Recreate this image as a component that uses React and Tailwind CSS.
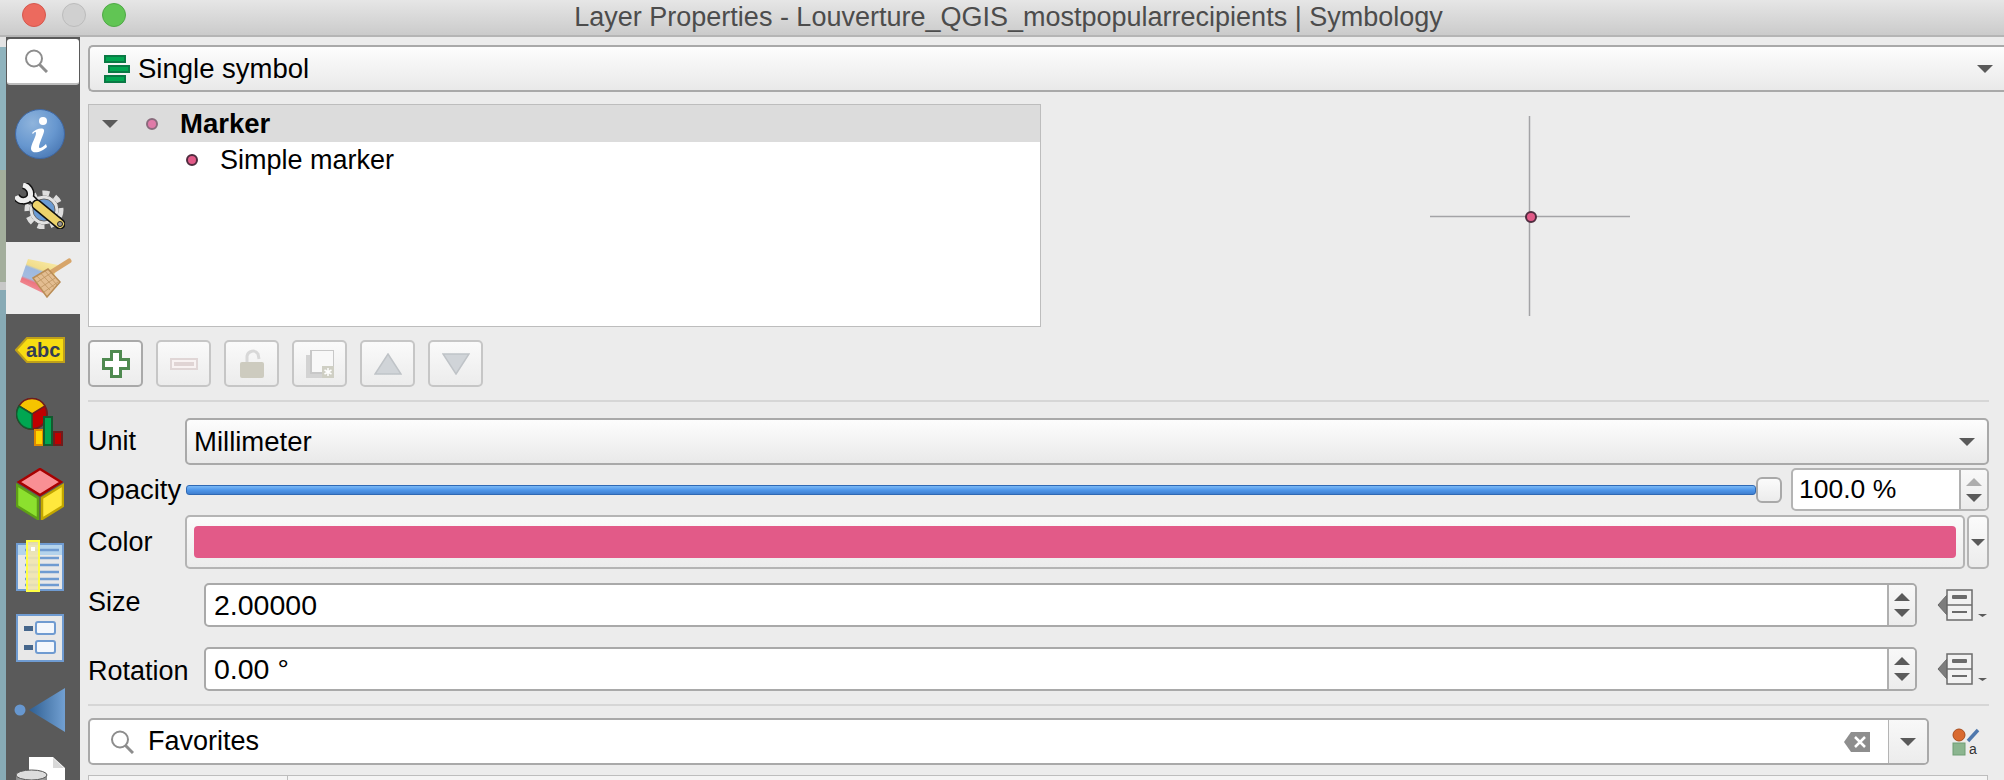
import React from 'react';

const font = { fontFamily: '"Liberation Sans", Arial, sans-serif' };

function Caret({ className = 'w-[16px] h-[8px]', fill = '#5a5a5a' }) {
  return (
    <svg viewBox="0 0 15 8" preserveAspectRatio="none" className={className}>
      <path d="M0 0h15L7.5 8z" fill={fill} />
    </svg>
  );
}

function Spinner({ upFill = '#5a5a5a' }) {
  return (
    <div className="w-[28px] self-stretch border-l-2 border-[#b0b0b0] flex flex-col items-center justify-center gap-[8px] bg-gradient-to-b from-[#f8f8f8] to-[#ececec] rounded-r-[4px]">
      <svg viewBox="0 0 15 8" preserveAspectRatio="none" className="w-[16px] h-[8px]"><path d="M7.5 0L15 8H0z" fill={upFill} /></svg>
      <Caret />
    </div>
  );
}

function SearchGlyph({ className, color = '#8d8d8d' }) {
  return (
    <svg viewBox="0 0 24 24" className={className} fill="none" stroke={color}>
      <circle cx="10" cy="9.500" r="8" strokeWidth="2" />
      <path d="M15.500 15.500L23 23" strokeWidth="3" />
    </svg>
  );
}

function InfoIcon() {
  return (
    <svg viewBox="0 0 50 50" className="w-[50px] h-[50px]">
      <defs>
        <radialGradient id="infoG" cx="35%" cy="28%" r="80%">
          <stop offset="0" stopColor="#8fb4dc" />
          <stop offset="0.6" stopColor="#6797cf" />
          <stop offset="1" stopColor="#4a78b4" />
        </radialGradient>
      </defs>
      <circle cx="25" cy="25" r="24.500" fill="url(#infoG)" stroke="#3f68a4" />
      <circle cx="28" cy="12" r="4" fill="#fff" />
      <path d="M17 24c3-4 11-6 12-3 1 2-5 13-5 17 0 2 3 1 7-3l1 3c-5 5-15 8-16 2 0-5 5-12 5-16 0-2-2-1-3 1z" fill="#fff" />
    </svg>
  );
}

function ToolsIcon() {
  return (
    <svg viewBox="0 0 50 46" className="w-[50px] h-[46px]">
      <circle cx="29" cy="27" r="15" fill="#e2e2e2" stroke="#555" strokeWidth="1" />
      <circle cx="29" cy="27" r="17" fill="none" stroke="#dedede" strokeWidth="5" strokeDasharray="7 6" />
      <circle cx="29" cy="27" r="11" fill="#6a9bd4" stroke="#666" />
      <path d="M1 13C4 19 12 19 15 14L26 25M15 14C17 8 13 3 8 2" fill="none" stroke="#111" strokeWidth="8" />
      <path d="M1 13C4 19 12 19 15 14L26 25M15 14C17 8 13 3 8 2" fill="none" stroke="#f0f0f0" strokeWidth="5" />
      <path d="M22 22L45 41" stroke="#111" strokeWidth="11" strokeLinecap="round" />
      <path d="M22 22L45 41" stroke="#edd36b" strokeWidth="8" strokeLinecap="round" />
      <circle cx="45" cy="41" r="2.500" fill="#999" stroke="#222" />
    </svg>
  );
}

function BrushIcon() {
  return (
    <svg viewBox="0 0 52 40" className="w-[52px] h-[40px]">
      <defs>
        <linearGradient id="flagG" x1="0.7" y1="0" x2="0.3" y2="1">
          <stop offset="0" stopColor="#f7e9a6" />
          <stop offset="0.3" stopColor="#f2dd8a" />
          <stop offset="0.36" stopColor="#9db8df" />
          <stop offset="0.62" stopColor="#a3bce0" />
          <stop offset="0.68" stopColor="#ee7480" />
          <stop offset="1" stopColor="#f0a0a4" />
        </linearGradient>
      </defs>
      <path d="M8 1L38 7 27 37 0 24z" fill="url(#flagG)" />
      <path d="M30 15L49 3" stroke="#d7a56a" strokeWidth="5" strokeLinecap="round" />
      <path d="M13 20L28 11 40 24 27 39z" fill="#e3bd91" stroke="#b98c55" strokeWidth="1.500" />
      <path d="M17 18L30 32M21 15.500L34 29.500M25 13L37 27M16 25L31 15M20 30L35 20M24 34L38 24" stroke="#bd935f" strokeWidth="0.800" fill="none" />
    </svg>
  );
}

function LabelIcon() {
  return (
    <svg viewBox="0 0 50 26" className="w-[50px] h-[26px]">
      <path d="M12 1h37v24H12L1 13z" fill="#f7dc12" stroke="#bfa01a" strokeWidth="2" />
      <text x="11" y="20" fontFamily="Liberation Sans, sans-serif" fontWeight="700" fontSize="20" fill="#333c55">abc</text>
    </svg>
  );
}

function DiagramIcon() {
  return (
    <svg viewBox="0 0 48 50" className="w-[48px] h-[50px]">
      <circle cx="16" cy="17" r="15" fill="#c00000" stroke="#6f1d1d" strokeWidth="2" />
      <path d="M16 17L3 9a15 15 0 0 1 26 0z" fill="#f5c400" stroke="#6f1d1d" strokeWidth="1.500" />
      <path d="M16 17L3 9a15 15 0 0 0 13 23z" fill="#00a651" stroke="#14592f" strokeWidth="1.500" />
      <rect x="19" y="33" width="8" height="15" fill="#ffd400" stroke="#e08a00" strokeWidth="2" />
      <rect x="28" y="20" width="8" height="28" fill="#00a651" stroke="#14592f" strokeWidth="2" />
      <rect x="38" y="35" width="8" height="13" fill="#c00000" stroke="#6f1d1d" strokeWidth="2" />
    </svg>
  );
}

function CubeIcon() {
  return (
    <svg viewBox="0 0 48 52" className="w-[48px] h-[52px]">
      <path d="M24 1l21 13-21 13L3 14z" fill="#f98f94" stroke="#a80000" strokeWidth="2.500" />
      <path d="M1 17l21 13v21L1 38z" fill="#8ce02e" stroke="#5ea016" strokeWidth="2.500" />
      <path d="M47 17L26 30v21l21-13z" fill="#ffe83d" stroke="#c2a600" strokeWidth="2.500" />
    </svg>
  );
}

function SourceFieldsIcon() {
  return (
    <svg viewBox="0 0 48 52" className="w-[48px] h-[52px]">
      <rect x="1" y="4" width="46" height="46" fill="#e8e8e8" stroke="#6f9bd1" strokeWidth="2" />
      <rect x="2" y="5" width="44" height="10" fill="#b4d3ec" />
      <path d="M9 10h34M9 18h34M9 25h34M9 32h34M9 39h34M9 45h34" stroke="#6f9bd1" strokeWidth="2.500" />
      <rect x="11" y="1" width="12" height="50" fill="#f1e5b0" fillOpacity="0.9" stroke="#ffff44" strokeWidth="2" />
      <rect x="15" y="7" width="4" height="4" fill="#fff" />
    </svg>
  );
}

function FormIcon() {
  return (
    <svg viewBox="0 0 48 48" className="w-[48px] h-[48px]">
      <rect x="1" y="1" width="46" height="46" fill="#e8e8e8" stroke="#6f9bd1" strokeWidth="2" />
      <rect x="8" y="12" width="9" height="5" fill="#45668c" />
      <rect x="8" y="31" width="9" height="5" fill="#45668c" />
      <rect x="20" y="8" width="19" height="12" rx="2" fill="#f3f7fc" stroke="#6f9bd1" strokeWidth="2" />
      <rect x="20" y="27" width="19" height="12" rx="2" fill="#f3f7fc" stroke="#6f9bd1" strokeWidth="2" />
    </svg>
  );
}

function JoinIcon() {
  return (
    <svg viewBox="0 0 52 44" className="w-[52px] h-[44px]">
      <defs>
        <linearGradient id="joinG" x1="0" x2="1" y1="0" y2="0">
          <stop offset="0" stopColor="#2f5f92" />
          <stop offset="1" stopColor="#72a0d2" />
        </linearGradient>
      </defs>
      <circle cx="6" cy="22" r="5.500" fill="#6797cf" />
      <path d="M15 22L51 0v44z" fill="url(#joinG)" />
    </svg>
  );
}

function StorageIcon() {
  return (
    <svg viewBox="0 0 50 34" className="w-[50px] h-[34px]">
      <defs>
        <linearGradient id="dbG" x1="0" x2="1" y1="0" y2="0">
          <stop offset="0" stopColor="#8a8a8a" />
          <stop offset="0.5" stopColor="#e2e2e2" />
          <stop offset="1" stopColor="#8a8a8a" />
        </linearGradient>
      </defs>
      <path d="M14 0h24l12 11v23H14z" fill="#fff" />
      <path d="M38 1v10h11z" fill="#d8d8d8" />
      <rect x="1" y="18" width="31" height="16" fill="url(#dbG)" />
      <ellipse cx="16.500" cy="18" rx="15.500" ry="5" fill="#dcdcdc" stroke="#555" />
    </svg>
  );
}

function DefinedIcon() {
  return (
    <svg viewBox="0 0 50 32" className="w-[50px] h-[32px] shrink-0">
      <path d="M10 6L1 16l9 10z" fill="#7d7d7d" stroke="#6a6a6a" />
      <rect x="10" y="1" width="25" height="30" fill="#f2f2f2" stroke="#6b6b6b" strokeWidth="1.500" />
      <path d="M10 16h25" stroke="#6b6b6b" strokeWidth="1.500" />
      <rect x="15" y="6" width="15" height="4" rx="1" fill="#6b6b6b" />
      <path d="M15 23h15" stroke="#6b6b6b" strokeWidth="2" />
      <path d="M41 25h9l-4.500 3z" fill="#5a5a5a" />
    </svg>
  );
}

function SymbolTypeIcon() {
  return (
    <svg viewBox="0 0 26 28" className="w-[26px] h-[28px]">
      <rect x="1" y="1" width="20" height="6" fill="#00a651" stroke="#0a7a45" strokeWidth="2" />
      <rect x="5" y="11" width="20" height="6" fill="#00a651" stroke="#0a7a45" strokeWidth="2" />
      <rect x="1" y="21" width="20" height="6" fill="#00a651" stroke="#0a7a45" strokeWidth="2" />
    </svg>
  );
}

function SmallMarker({ fill = '#e25a88', stroke = '#4f2c3f' }) {
  return (
    <svg viewBox="0 0 14 14" className="w-[14px] h-[14px]">
      <circle cx="7" cy="7" r="5" fill={fill} stroke={stroke} strokeWidth="2" />
    </svg>
  );
}

function ToolButton({ active, children }) {
  return (
    <div className={`w-[55px] h-[47px] rounded-[5px] border-2 flex items-center justify-center bg-gradient-to-b from-[#fafafa] to-[#ececec] ${active ? 'border-[#a9a9a9]' : 'border-[#c6c6c6]'}`}>
      {children}
    </div>
  );
}

function SideItem({ active, className = '', children }) {
  return (
    <div className={`h-[72px] shrink-0 flex items-center justify-center ${active ? 'bg-[#ececec] pl-[6px]' : 'pr-[6px]'} ${className}`}>
      {children}
    </div>
  );
}

function Combo({ className, children }) {
  return (
    <div className={`rounded-[5px] border-2 border-[#a9a9a9] bg-gradient-to-b from-[#fdfdfd] via-[#f3f3f3] to-[#e9e9e9] flex items-center ${className}`}>
      {children}
    </div>
  );
}

function NumberRow({ label, value, labelClass, className }) {
  return (
    <div className={`flex items-center h-[44px] shrink-0 mr-[15px] ${className}`}>
      <div className={`w-[116px] text-[27px] leading-none text-black ${labelClass}`}>{label}</div>
      <div className="flex-1 h-[44px] rounded-[5px] border-2 border-[#a9a9a9] bg-white flex items-center">
        <div className="flex-1 pl-[8px] text-[28.500px] leading-none text-black">{value}</div>
        <Spinner />
      </div>
      <div className="ml-[20px] w-[52px]"><DefinedIcon /></div>
    </div>
  );
}

export default function App() {
  return (
    <div style={font} className="w-[2004px] h-[780px] overflow-hidden flex flex-col bg-[#ececec]">
      {/* title bar */}
      <div className="h-[37px] shrink-0 flex items-center bg-gradient-to-b from-[#e6e6e6] to-[#cbcbcb] border-b-2 border-[#b5b5b5] relative">
        <div className="flex items-center gap-[16px] pl-[22px] mb-[5px]">
          <div className="w-[24px] h-[24px] rounded-full bg-[#ec6a5e] border border-[#d5574d]" />
          <div className="w-[24px] h-[24px] rounded-full bg-[#d0d0d0] border border-[#bcbcbc]" />
          <div className="w-[24px] h-[24px] rounded-full bg-[#61c554] border border-[#4fa946]" />
        </div>
        <div className="absolute inset-0 flex items-center justify-center text-[27px] text-[#4c4c4c] pl-[13px]">
          Layer Properties - Louverture_QGIS_mostpopularrecipients | Symbology
        </div>
      </div>

      <div className="flex-1 flex min-h-0">
        {/* map peeking out behind the window */}
        <div className="w-[6px] shrink-0 flex flex-col">
          <div className="h-[10px] bg-[#e4e4e4]" />
          <div className="h-[123px] bg-[#8fb3bd]" />
          <div className="h-[112px] bg-[#a3ae9c]" />
          <div className="h-[8px] bg-[#c8c8c8]" />
          <div className="flex-1 bg-[#87aab5]" />
        </div>

        {/* tab strip */}
        <div className="w-[74px] shrink-0 bg-[#5a5a5a] flex flex-col overflow-hidden">
          <div className="h-[46px] shrink-0 mx-[1px] mt-[2px] mb-[13px] bg-white rounded-[3px] border-b-2 border-[#bdbdbd] flex items-center justify-center pr-[14px]">
            <SearchGlyph className="w-[24px] h-[24px]" />
          </div>
          <SideItem><InfoIcon /></SideItem>
          <SideItem><ToolsIcon /></SideItem>
          <SideItem active><BrushIcon /></SideItem>
          <SideItem><LabelIcon /></SideItem>
          <SideItem><DiagramIcon /></SideItem>
          <SideItem><CubeIcon /></SideItem>
          <SideItem><SourceFieldsIcon /></SideItem>
          <SideItem><FormIcon /></SideItem>
          <SideItem className="mb-[1px]"><JoinIcon /></SideItem>
          <SideItem className="items-start pt-[10px]"><StorageIcon /></SideItem>
        </div>

        {/* main panel */}
        <div className="flex-1 min-w-0 pl-[8px] pt-[8px] flex flex-col">
          <Combo className="h-[47px] shrink-0 pl-[14px] pr-[11px] border-r-0 rounded-r-none">
            <SymbolTypeIcon />
            <span className="ml-[8px] text-[27.500px] leading-none text-black">Single symbol</span>
            <div className="ml-auto"><Caret /></div>
          </Combo>

          <div className="flex mt-[12px] h-[223px] shrink-0">
            <div className="w-[953px] border border-[#bdbdbd] bg-white">
              <div className="h-[37px] bg-[#dcdcdc] flex items-center">
                <div className="ml-[13px]"><Caret /></div>
                <div className="ml-[27px]"><SmallMarker fill="#e07aa8" stroke="#8a6a7c" /></div>
                <span className="ml-[21px] text-[27.500px] leading-none font-bold text-black">Marker</span>
              </div>
              <div className="h-[36px] flex items-center pl-[96px]">
                <SmallMarker />
                <span className="ml-[21px] text-[27px] leading-none text-black">Simple marker</span>
              </div>
            </div>
            <div className="flex-1 flex items-center justify-center">
              <svg viewBox="0 0 200 200" className="w-[200px] h-[200px] ml-[15px]">
                <path d="M0 100.500h200M99.500 0v200" stroke="#a3a3a6" strokeWidth="1.500" />
                <circle cx="101" cy="101" r="5" fill="#e25a88" stroke="#4f2c3f" strokeWidth="2" />
              </svg>
            </div>
          </div>

          <div className="flex gap-[13px] mt-[13px] shrink-0">
            <ToolButton active>
              <svg viewBox="0 0 28 28" className="w-[28px] h-[28px]">
                <path d="M9.500 1.500h9v8h8v9h-8v8h-9v-8h-8v-9h8z" fill="#fff" stroke="#4f8a50" strokeWidth="3" />
              </svg>
            </ToolButton>
            <ToolButton>
              <svg viewBox="0 0 28 12" className="w-[28px] h-[12px]">
                <rect x="1" y="1" width="26" height="10" fill="#f8f2f2" stroke="#e0d6d6" strokeWidth="2" />
                <rect x="4" y="4" width="20" height="4" fill="#e0d4d4" />
              </svg>
            </ToolButton>
            <ToolButton>
              <svg viewBox="0 0 24 30" className="w-[24px] h-[30px]">
                <path d="M7 13V7a6 6 0 0 1 11 -2l1 5" fill="none" stroke="#d8d8d8" strokeWidth="3" />
                <rect x="0" y="13" width="24" height="16" rx="2" fill="#cdcbbf" />
              </svg>
            </ToolButton>
            <ToolButton>
              <svg viewBox="0 0 28 28" className="w-[28px] h-[28px]">
                <rect x="0" y="5" width="23" height="23" fill="#d3d3d3" />
                <rect x="5" y="0" width="23" height="23" fill="#f8f8f8" stroke="#c8c8c8" strokeWidth="2" />
                <rect x="16" y="16" width="12" height="12" fill="#cfcfc4" />
                <path d="M22 18v8M18.500 20l7 4M25.500 20l-7 4" stroke="#fff" strokeWidth="1.500" />
              </svg>
            </ToolButton>
            <ToolButton>
              <svg viewBox="0 0 28 22" className="w-[28px] h-[22px]">
                <path d="M14 1l13 20H1z" fill="#d0d4d8" stroke="#bfc3c7" strokeWidth="1.500" />
              </svg>
            </ToolButton>
            <ToolButton>
              <svg viewBox="0 0 28 22" className="w-[28px] h-[22px]">
                <path d="M14 21L27 1H1z" fill="#d0d4d8" stroke="#bfc3c7" strokeWidth="1.500" />
              </svg>
            </ToolButton>
          </div>

          <div className="h-[2px] mt-[13px] mr-[15px] bg-[#d6d6d6] shrink-0" />

          {/* symbol settings */}
          <div className="mt-[16px] mr-[15px] flex items-center h-[47px] shrink-0">
            <div className="w-[97px] text-[27px] leading-none text-black">Unit</div>
            <Combo className="flex-1 h-[47px] pl-[7px] pr-[12px]">
              <span className="text-[27.500px] leading-none text-black">Millimeter</span>
              <div className="ml-auto"><Caret /></div>
            </Combo>
          </div>

          <div className="mt-[3px] mr-[15px] flex items-center h-[43px] shrink-0">
            <div className="w-[98px] text-[27.500px] leading-none text-black">Opacity</div>
            <div className="flex-1 flex items-center relative mr-[9px]">
              <div className="flex-1 h-[10px] rounded-[3px] border border-[#2f69b4] bg-gradient-to-b from-[#7ab8f5] via-[#4f97ea] to-[#3f7fd0] mr-[26px]" />
              <div className="absolute right-0 w-[26px] h-[26px] rounded-[6px] border-2 border-[#a9a9a9] bg-gradient-to-b from-[#fbfbfb] to-[#ececec]" />
            </div>
            <div className="w-[198px] h-[43px] rounded-[5px] border-2 border-[#b4b4b4] bg-white flex items-center">
              <div className="flex-1 pl-[6px] text-[26.500px] leading-none text-black">100.0 %</div>
              <Spinner upFill="#adadad" />
            </div>
          </div>

          <div className="mt-[4px] mr-[15px] flex items-center h-[54px] shrink-0">
            <div className="w-[97px] text-[27px] leading-none text-black">Color</div>
            <div className="flex-1 h-[54px] rounded-[5px] border-2 border-[#b4b4b4] bg-gradient-to-b from-[#fbfbfb] to-[#ececec] flex items-center pl-[7px] pr-[7px]">
              <div className="flex-1 h-[32px] rounded-[4px] bg-[#e25a88]" />
            </div>
            <div className="ml-[2px] w-[22px] h-[54px] rounded-[5px] border-2 border-[#b4b4b4] bg-gradient-to-b from-[#fbfbfb] to-[#ececec] flex items-center justify-center">
              <Caret className="w-[14px] h-[7px]" />
            </div>
          </div>

          <NumberRow className="mt-[14px]" labelClass="pb-[6px]" label="Size" value="2.00000" />
          <NumberRow className="mt-[20px]" labelClass="pt-[4px]" label="Rotation" value="0.00 °" />

          <div className="h-[2px] mt-[13px] mr-[15px] bg-[#d6d6d6] shrink-0" />

          <div className="mt-[12px] mr-[24px] flex items-center h-[47px] shrink-0">
            <div className="flex-1 h-[47px] rounded-[5px] border-2 border-[#a9a9a9] bg-white flex items-center">
              <div className="ml-[20px]"><SearchGlyph className="w-[24px] h-[24px]" /></div>
              <span className="ml-[14px] text-[27px] leading-none text-black">Favorites</span>
              <svg viewBox="0 0 26 20" className="ml-auto mr-[18px] w-[26px] h-[20px]">
                <path d="M7 0h19v20H7L0 10z" fill="#8e8e8e" />
                <path d="M11 5l10 10M21 5L11 15" stroke="#fff" strokeWidth="2.500" />
              </svg>
              <div className="w-[39px] self-stretch border-l border-[#b4b4b4] bg-gradient-to-b from-[#f8f8f8] to-[#ececec] rounded-r-[4px] flex items-center justify-center">
                <Caret />
              </div>
            </div>
            <div className="ml-[23px] w-[28px]">
              <svg viewBox="0 0 28 28" className="w-[28px] h-[28px]">
                <circle cx="7" cy="7" r="6" fill="#d96a2f" stroke="#a84c1c" />
                <path d="M16 13L26 2" stroke="#4f78ad" strokeWidth="3.500" />
                <rect x="1" y="15" width="12" height="12" fill="#8bb58f" stroke="#6f9e75" />
                <text x="17" y="26" fontSize="14" fontFamily="Liberation Sans, sans-serif" fill="#333">a</text>
              </svg>
            </div>
          </div>

          <div className="mt-[10px] h-[20px] shrink-0 mr-[16px] border border-[#bdbdbd] bg-[#f4f4f4] flex">
            <div className="w-[199px] border-r border-[#bdbdbd]" />
          </div>
        </div>
      </div>
    </div>
  );
}
